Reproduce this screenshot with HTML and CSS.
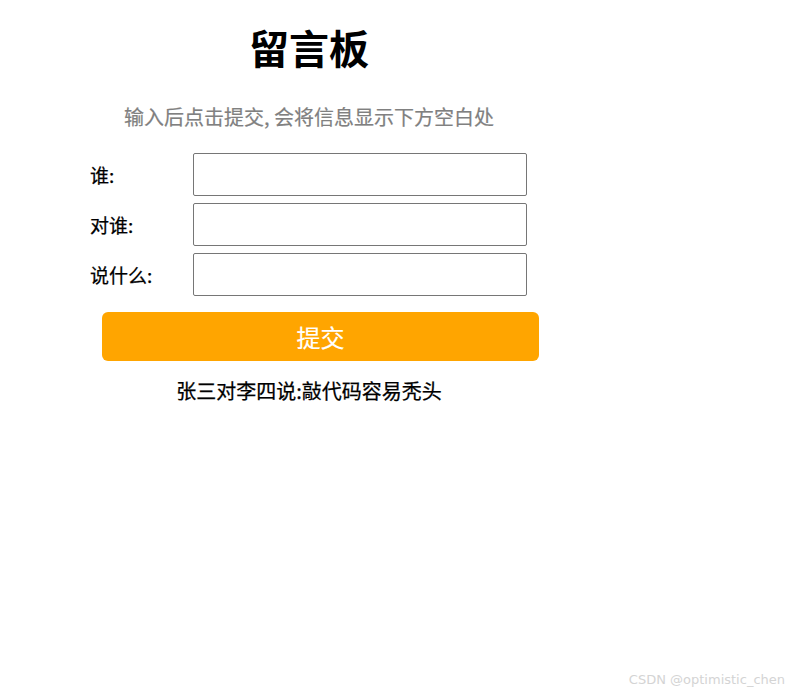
FILE: index.html
```html
<!DOCTYPE html>
<html lang="zh-CN">
  <head>
    <meta charset="UTF-8" />
    <meta name="viewport" content="width=device-width, initial-scale=1.0" />
    <title>留言板</title>
    <link rel="stylesheet" href="styles.css">
  </head>
  <body>
    <div class="board">
      <h1 class="title">留言板</h1>
      <p class="tip">输入后点击提交, 会将信息显示下方空白处</p>

      <div class="row">
        <label class="label">谁:</label>
        <input type="text" class="field" />
      </div>
      <div class="row">
        <label class="label">对谁:</label>
        <input type="text" class="field" />
      </div>
      <div class="row">
        <label class="label">说什么:</label>
        <input type="text" class="field" />
      </div>

      <button class="submit-btn">提交</button>

      <div class="messages">
        <p class="message">张三对李四说:敲代码容易秃头</p>
      </div>
    </div>

    <div class="watermark">CSDN @optimistic_chen</div>
  </body>
</html>
```

FILE: styles.css
```css
body {
  margin: 0;
  font-family: "Noto Sans CJK SC", "Noto Sans", sans-serif;
  color: #000;
}
.board {
  width: 438px;
  margin-left: 90px;
  padding-top: 22px;
  display: flex;
  flex-direction: column;
}
.title {
  margin: 0;
  font-size: 40px;
  line-height: 50px;
  font-weight: bold;
  text-align: center;
}
.tip {
  margin: 30px 0 0;
  font-size: 20px;
  line-height: 30px;
  color: #808080;
  text-align: center;
  -webkit-text-stroke: 0.2px currentColor;
}
.row {
  display: flex;
  align-items: center;
  height: 43px;
  margin-top: 7px;
}
.tip + .row {
  margin-top: 21px;
}
.label {
  width: 103px;
  font-size: 19px;
  -webkit-text-stroke: 0.25px currentColor;
}
.field {
  box-sizing: border-box;
  width: 334px;
  height: 43px;
  border: 1px solid #767676;
  border-radius: 2px;
  outline: none;
}
.submit-btn {
  width: 437px;
  height: 49px;
  margin: 16px 0 0 12px;
  border: none;
  border-radius: 6px;
  background-color: orange;
  color: white;
  font-family: inherit;
  font-size: 24px;
  -webkit-text-stroke: 0.2px currentColor;
  cursor: pointer;
}
.messages {
  margin-top: 16px;
}
.message {
  margin: 0;
  font-size: 20px;
  line-height: 28px;
  text-align: center;
  -webkit-text-stroke: 0.25px currentColor;
}

/* CSDN watermark */
.watermark {
  position: absolute;
  right: 6px;
  bottom: 6px;
  font-family: "DejaVu Sans", sans-serif;
  font-size: 13px;
  color: #d4d4d4;
}
```
